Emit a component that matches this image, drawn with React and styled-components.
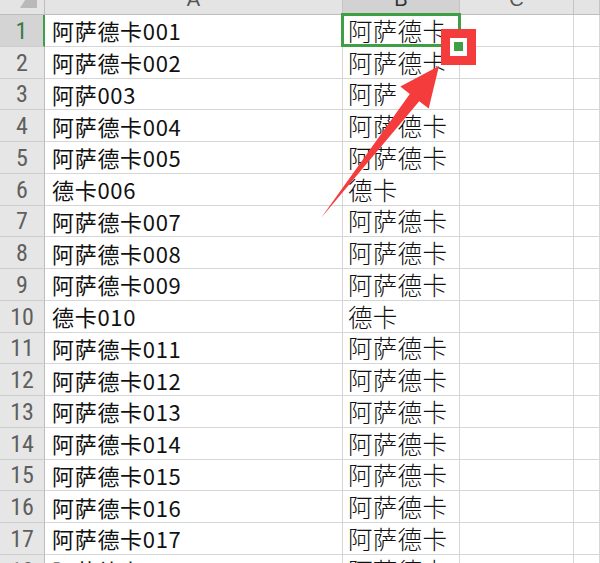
import React from "react";
import styled, { createGlobalStyle, css } from "styled-components";

const GlobalStyle = createGlobalStyle`
  html, body {
    margin: 0;
    padding: 0;
    background: #fff;
    overflow: hidden;
  }
`;

const rows = [
  ["阿萨德卡001", "阿萨德卡"],
  ["阿萨德卡002", "阿萨德卡"],
  ["阿萨003", "阿萨"],
  ["阿萨德卡004", "阿萨德卡"],
  ["阿萨德卡005", "阿萨德卡"],
  ["德卡006", "德卡"],
  ["阿萨德卡007", "阿萨德卡"],
  ["阿萨德卡008", "阿萨德卡"],
  ["阿萨德卡009", "阿萨德卡"],
  ["德卡010", "德卡"],
  ["阿萨德卡011", "阿萨德卡"],
  ["阿萨德卡012", "阿萨德卡"],
  ["阿萨德卡013", "阿萨德卡"],
  ["阿萨德卡014", "阿萨德卡"],
  ["阿萨德卡015", "阿萨德卡"],
  ["阿萨德卡016", "阿萨德卡"],
  ["阿萨德卡017", "阿萨德卡"],
  ["阿萨德卡018", "阿萨德卡"],
];

const columns = ["A", "B", "C", ""];

const App = () => {
  return (
    <>
      <GlobalStyle />
      <Sheet>
        <Corner>
          <SelectAll />
        </Corner>
        {columns.map((c) => (
          <ColHeader key={c || "D"} $selected={c === "B"}>
            <span>{c}</span>
          </ColHeader>
        ))}

        {rows.map(([a, b], i) => (
          <React.Fragment key={i}>
            <RowHeader $selected={i === 0}>{i + 1}</RowHeader>
            <Cell>{a}</Cell>
            <Cell $big $selected={i === 0}>
              {b}
            </Cell>
            <Cell />
            <Cell />
          </React.Fragment>
        ))}

        <Annotation viewBox="0 0 600 563" width="600" height="563">
          <polygon
            points="321,218 409.8,93.9 400.3,86.6 439,66 428.7,108.6 419.2,101.3"
            fill="#f43c3c"
          />
          <rect x="445.5" y="33.5" width="26" height="27" fill="#fff" stroke="#f43c3c" strokeWidth="9" />
          <rect x="454" y="42" width="9" height="9" fill="#3f9f45" />
        </Annotation>
      </Sheet>
    </>
  );
};

export default App;

const Sheet = styled.div`
  position: relative;
  width: 600px;
  height: 563px;
  overflow: hidden;
  display: grid;
  grid-template-columns: 45px 298px 117px 114px 1fr;
  grid-template-rows: 15px repeat(18, 31.75px);
  font-family: "Noto Sans CJK SC", "Noto Sans", sans-serif;
  color: #111;
`;

const Corner = styled.div`
  box-sizing: border-box;
  background: #e4e4e4;
  border-right: 1px solid #bdbdbd;
  border-bottom: 1px solid #bdbdbd;
  display: flex;
  justify-content: flex-end;
  align-items: flex-start;
  padding-right: 7px;
`;

const SelectAll = styled.div`
  width: 17px;
  height: 8px;
  background: #b9b9b9;
  clip-path: polygon(0 100%, 100% 100%, 100% 0, 30% 0);
`;

const ColHeader = styled.div`
  box-sizing: border-box;
  background: ${(p) => (p.$selected ? "#d2d2d2" : "#e4e4e4")};
  border-right: 1px solid #c4c4c4;
  border-bottom: 1px solid #bdbdbd;
  overflow: hidden;
  display: flex;
  justify-content: center;
  align-items: flex-end;
  padding-bottom: 5px;
  font-family: "Liberation Sans", Arial, sans-serif;
  font-size: 20px;
  color: ${(p) => (p.$selected ? "#333" : "#555")};

  span {
    line-height: 20px;
  }
`;

const RowHeader = styled.div`
  box-sizing: border-box;
  background: ${(p) => (p.$selected ? "#d4d4d4" : "#e6e6e6")};
  border-right: ${(p) => (p.$selected ? "2px solid #3f9f45" : "1px solid #bdbdbd")};
  border-bottom: 1px solid #cdcdcd;
  display: flex;
  align-items: center;
  justify-content: center;
  padding-top: 1px;
  font-family: "Liberation Sans Narrow", "Roboto Condensed", Roboto, sans-serif;
  font-size: 24px;
  color: ${(p) => (p.$selected ? "#3d7a45" : "#5f5f5f")};
`;

const Cell = styled.div`
  position: relative;
  box-sizing: border-box;
  border-right: 1px solid #d6d6d6;
  border-bottom: 1px solid #d6d6d6;
  display: flex;
  align-items: center;
  white-space: nowrap;
  padding-left: 7px;
  font-size: 22px;
  letter-spacing: 0.7px;

  ${(p) =>
    p.$big &&
    css`
      padding-left: 5px;
      font-size: 24.5px;
      font-weight: 300;
      letter-spacing: 0.3px;
    `}

  ${(p) =>
    p.$selected &&
    css`
      &::after {
        content: "";
        position: absolute;
        left: -2px;
        top: -2px;
        right: -2px;
        bottom: -1px;
        border: 3px solid #3f9f45;
      }
    `}
`;

const Annotation = styled.svg`
  position: absolute;
  left: 0;
  top: 0;
  pointer-events: none;
`;
